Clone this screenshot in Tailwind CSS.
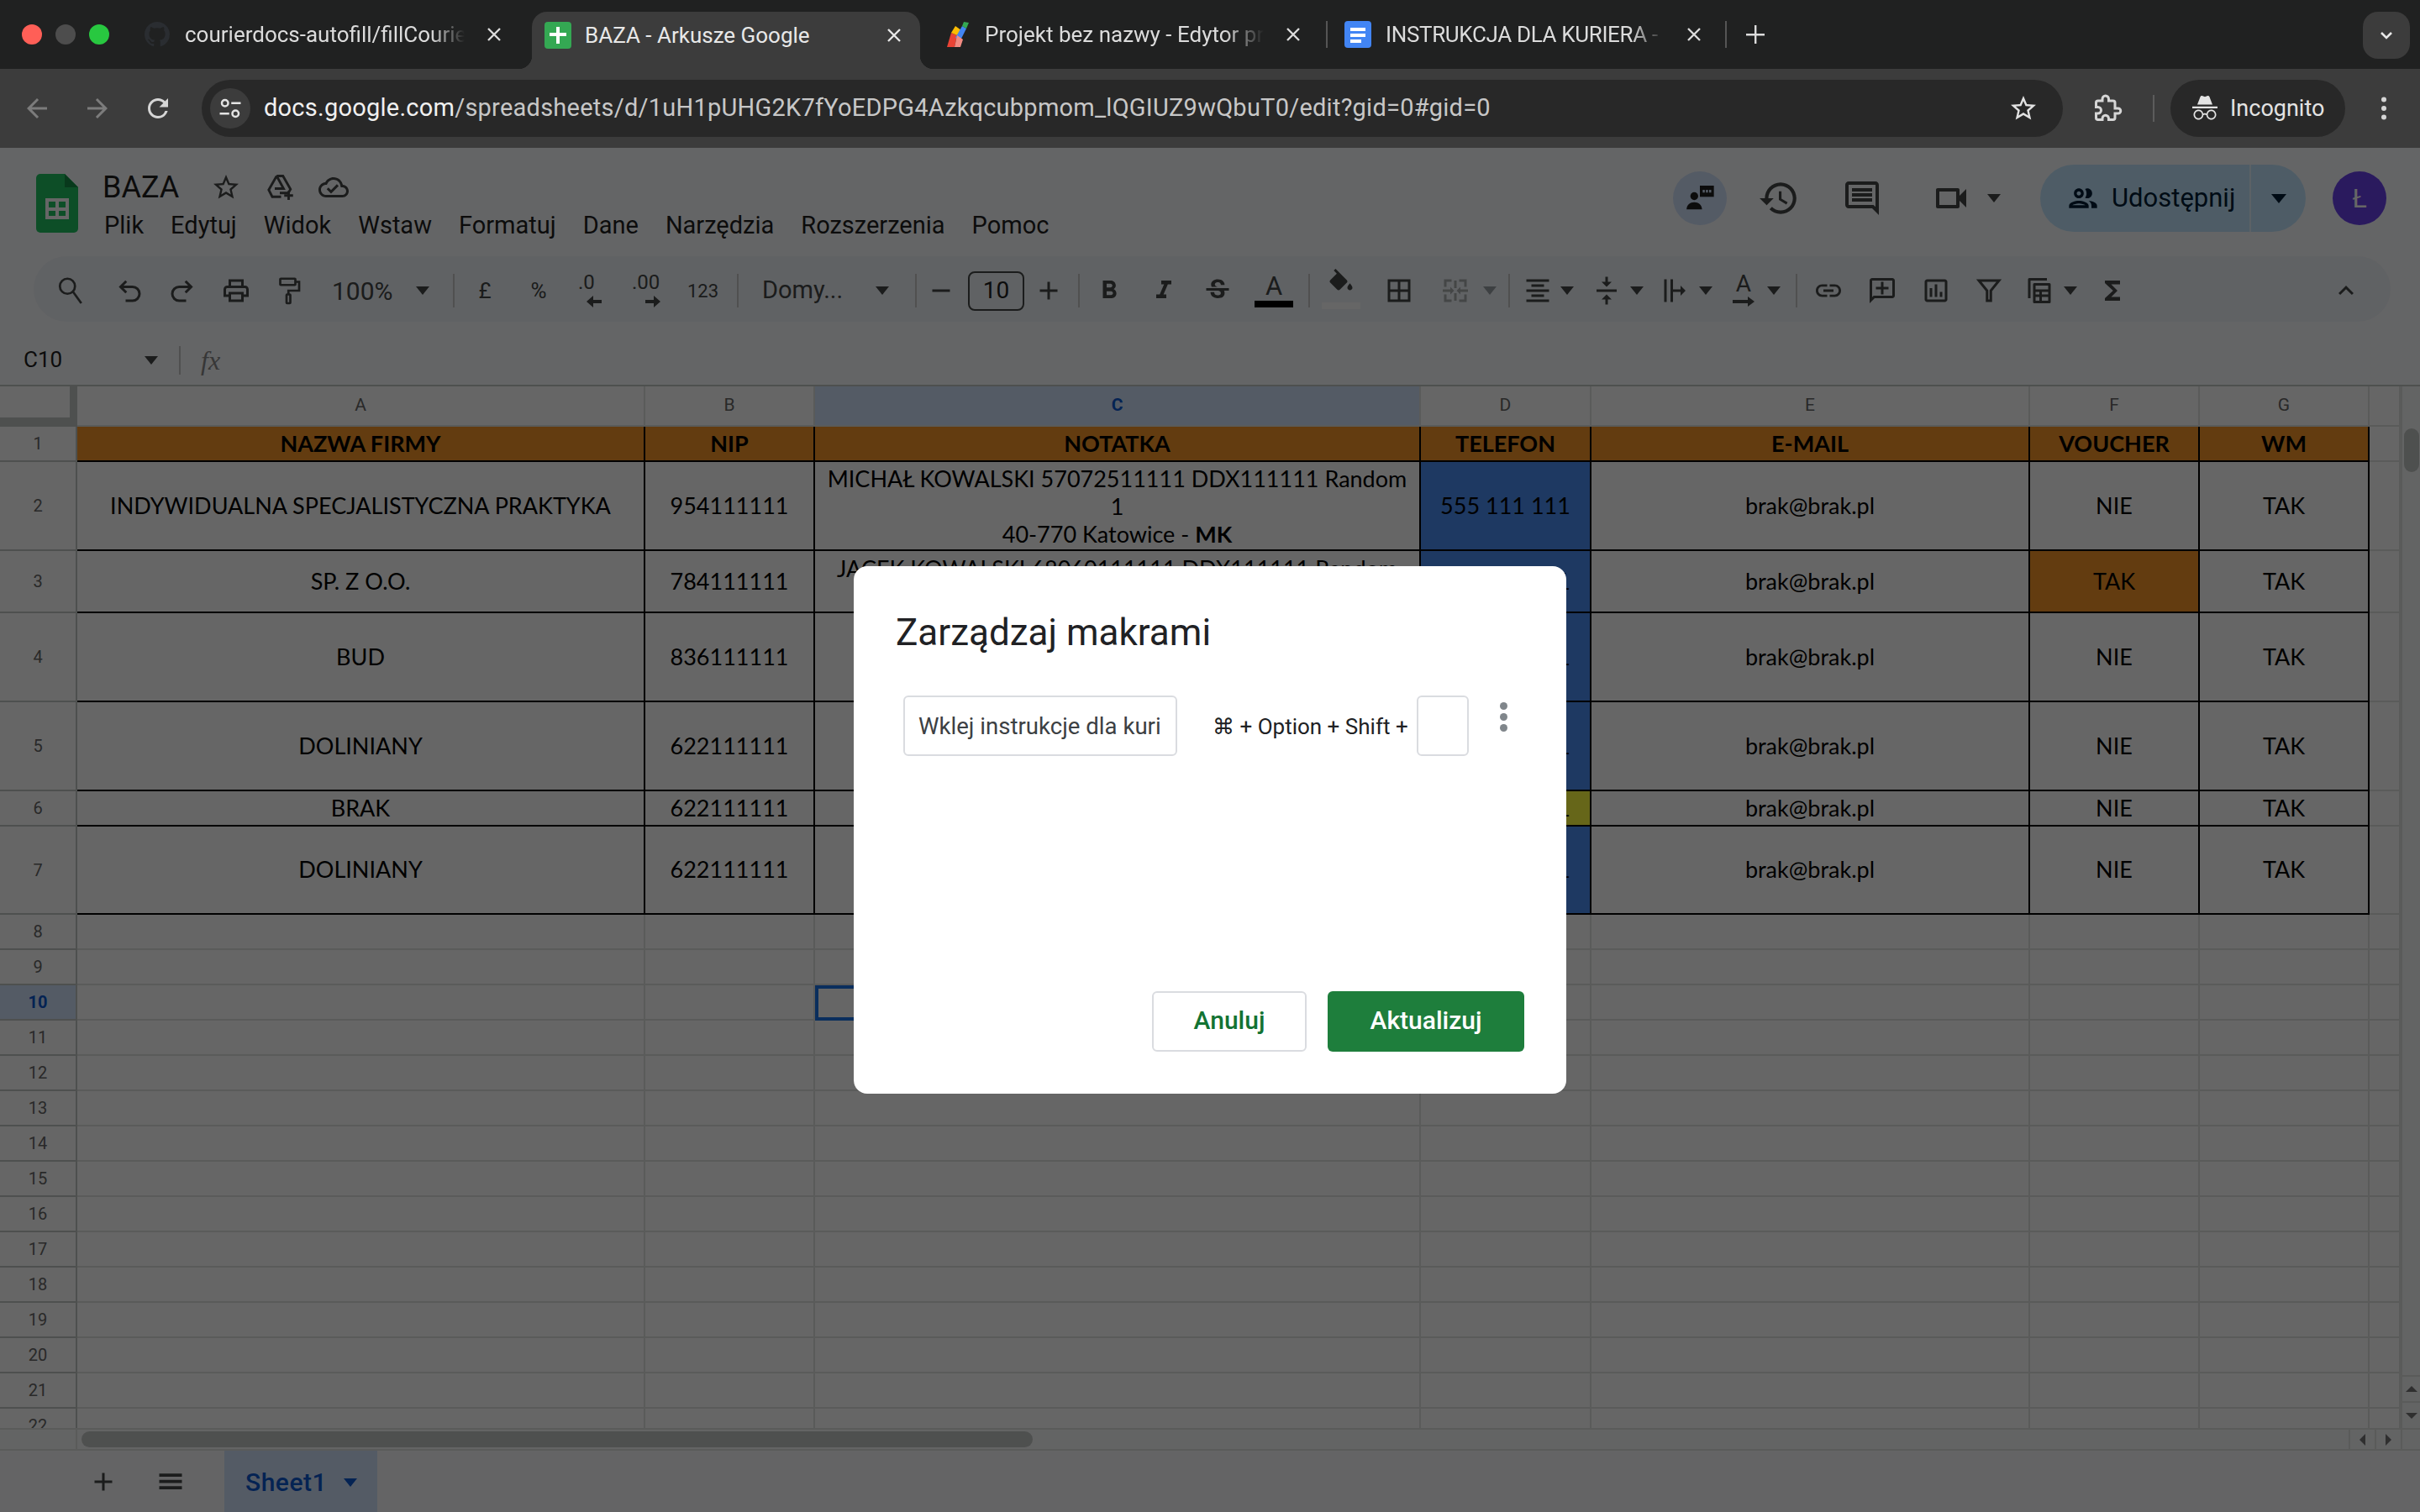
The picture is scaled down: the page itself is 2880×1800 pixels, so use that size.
<!DOCTYPE html>
<html lang="pl">
<head>
<meta charset="utf-8">
<title>BAZA</title>
<script src="https://cdn.jsdelivr.net/npm/@tailwindcss/browser@4"></script>
</head>
<body class="m-0">
<div class="relative w-[2880px] h-[1800px] overflow-hidden bg-white flex flex-col font-['Roboto',sans-serif] text-[#1f1f1f]">

  <!-- tab strip -->
  <div class="h-[82px] shrink-0 bg-[#202121] flex items-start text-[#dcdcdc] text-[26px]">
    <div class="w-[172px] shrink-0 h-[82px] flex items-center pl-[26px]">
      <div class="flex gap-[16px]">
        <span class="w-[24px] h-[24px] rounded-full bg-[#ff5f57]"></span>
        <span class="w-[24px] h-[24px] rounded-full bg-[#4d4d4d]"></span>
        <span class="w-[24px] h-[24px] rounded-full bg-[#28c840]"></span>
      </div>
    </div>
    <div class="w-[461px] shrink-0 h-[82px] flex items-center">
      <svg class="w-[30px] h-[30px]" viewBox="0 0 16 16" fill="#2a2d31"><path d="M8 0C3.58 0 0 3.58 0 8c0 3.54 2.29 6.53 5.47 7.59.4.07.55-.17.55-.38 0-.19-.01-.82-.01-1.49-2.01.37-2.53-.49-2.69-.94-.09-.23-.48-.94-.82-1.13-.28-.15-.68-.52-.01-.53.63-.01 1.08.58 1.23.82.72 1.21 1.87.87 2.33.66.07-.52.28-.87.51-1.07-1.78-.2-3.64-.89-3.64-3.95 0-.87.31-1.59.82-2.15-.08-.2-.36-1.02.08-2.12 0 0 .67-.21 2.2.82.64-.18 1.32-.27 2-.27s1.36.09 2 .27c1.53-1.04 2.2-.82 2.2-.82.44 1.1.16 1.92.08 2.12.51.56.82 1.27.82 2.15 0 3.07-1.87 3.75-3.65 3.95.29.25.54.73.54 1.48 0 1.07-.01 1.93-.01 2.2 0 .21.15.46.55.38A8.01 8.01 0 0 0 16 8c0-4.42-3.58-8-8-8z"/></svg>
      <span class="ml-[18px] w-[333px] overflow-hidden whitespace-nowrap [mask-image:linear-gradient(to_right,black_88%,transparent)]">courierdocs-autofill/fillCourierDocs</span>
      <svg class="ml-[24px] w-[22px] h-[22px]" viewBox="0 0 22 22" stroke="#dcdcdc" stroke-width="2.4"><path d="M4 4l14 14M18 4L4 18"/></svg>
    </div>
    <div class="relative w-[462px] shrink-0 h-[68px] mt-[14px] bg-[#3c3c3c] rounded-t-[18px] flex items-center pl-[15px] pb-[12px] text-[#e8e8e8]">
      <div class="absolute -left-[16px] bottom-0 w-[16px] h-[16px] bg-[radial-gradient(circle_at_0_0,transparent_16px,#3c3c3c_16.5px)]"></div>
      <div class="absolute -right-[16px] bottom-0 w-[16px] h-[16px] bg-[radial-gradient(circle_at_100%_0,transparent_16px,#3c3c3c_16.5px)]"></div>
      <svg class="w-[32px] h-[32px]" viewBox="0 0 32 32"><rect width="32" height="32" rx="4" fill="#34a853"/><path d="M14 6h4v7h8v4h-8v9h-4v-9H6v-4h8z" fill="#fff"/></svg>
      <span class="ml-[16px] w-[351px] whitespace-nowrap">BAZA - Arkusze Google</span>
      <svg class="ml-[6px] w-[22px] h-[22px]" viewBox="0 0 22 22" stroke="#e8e8e8" stroke-width="2.4"><path d="M4 4l14 14M18 4L4 18"/></svg>
    </div>
    <div class="w-[485px] shrink-0 h-[82px] flex items-center pl-[30px]">
      <svg class="w-[30px] h-[32px]" viewBox="0 0 30 32"><path d="M2 31L7 14l7 3-3 14z" fill="#ea4335"/><path d="M7 14l5-8 7 5-5 6z" fill="#fbbc04"/><path d="M12 20L20 6l5 3-7 14z" fill="#4285f4"/><path d="M20 6l2-5 6 1-3 7z" fill="#34a853"/><path d="M11 31l3-14 7 5-3 9z" fill="#f28b82"/></svg>
      <span class="ml-[17px] w-[332px] overflow-hidden whitespace-nowrap [mask-image:linear-gradient(to_right,black_86%,transparent)]">Projekt bez nazwy - Edytor projektu</span>
      <svg class="ml-[24px] w-[22px] h-[22px]" viewBox="0 0 22 22" stroke="#dcdcdc" stroke-width="2.4"><path d="M4 4l14 14M18 4L4 18"/></svg>
      <span class="ml-[28px] w-[2px] h-[32px] bg-[#555]"></span>
    </div>
    <div class="w-[524px] shrink-0 h-[82px] flex items-center pl-[20px]">
      <svg class="w-[32px] h-[32px]" viewBox="0 0 32 32"><rect width="32" height="32" rx="4" fill="#4285f4"/><path d="M7 8h18v4H7zM7 15h18v4H7zM7 22h13v4H7z" fill="#fff"/></svg>
      <span class="ml-[17px] w-[332px] overflow-hidden whitespace-nowrap tracking-[-0.35px] [mask-image:linear-gradient(to_right,black_88%,transparent)]">INSTRUKCJA DLA KURIERA - Dokumenty</span>
      <svg class="ml-[24px] w-[22px] h-[22px]" viewBox="0 0 22 22" stroke="#dcdcdc" stroke-width="2.4"><path d="M4 4l14 14M18 4L4 18"/></svg>
      <span class="ml-[26px] w-[2px] h-[32px] bg-[#555]"></span>
      <svg class="ml-[22px] w-[24px] h-[24px]" viewBox="0 0 24 24" fill="#dcdcdc"><path d="M11 1h2.4v10H23v2.4h-9.6V23H11v-9.6H1V11h10z"/></svg>
    </div>
    <div class="ml-auto mr-[12px] mt-[14px] w-[56px] h-[56px] rounded-[18px] bg-[#3c3c3c] flex items-center justify-center">
      <svg class="w-[24px] h-[24px]" viewBox="0 0 24 24" fill="none" stroke="#e8e8e8" stroke-width="2.6"><path d="M6 9l6 6 6-6"/></svg>
    </div>
  </div>

  <!-- address bar -->
  <div class="h-[94px] shrink-0 bg-[#3c3c3c] flex items-center">
    <svg class="ml-[26px] w-[36px] h-[36px]" viewBox="0 0 24 24" fill="#7c7c7c"><path d="M20 11H7.83l5.59-5.59L12 4l-8 8 8 8 1.41-1.41L7.83 13H20v-2z"/></svg>
    <svg class="ml-[36px] w-[36px] h-[36px]" viewBox="0 0 24 24" fill="#7c7c7c"><path d="M12 4l-1.41 1.41L16.17 11H4v2h12.17l-5.58 5.59L12 20l8-8z"/></svg>
    <svg class="ml-[36px] w-[36px] h-[36px]" viewBox="0 0 24 24" fill="#d6d6d6"><path d="M17.65 6.35A7.958 7.958 0 0 0 12 4c-4.42 0-7.99 3.58-7.99 8s3.57 8 7.99 8c3.73 0 6.84-2.55 7.73-6h-2.08A5.99 5.99 0 0 1 12 18c-3.31 0-6-2.69-6-6s2.69-6 6-6c1.66 0 3.14.69 4.22 1.78L13 11h7V4l-2.35 2.35z"/></svg>
    <div class="ml-[34px] w-[2215px] h-[68px] rounded-full bg-[#282828] flex items-center pl-[10px]">
      <div class="w-[48px] h-[48px] rounded-full bg-[#3c3c3c] flex items-center justify-center">
        <svg class="w-[30px] h-[30px]" viewBox="0 0 24 24" fill="none" stroke="#e3e3e3" stroke-width="2"><circle cx="7" cy="7" r="3"/><path d="M13 7h9M2 17h9"/><circle cx="17" cy="17" r="3"/></svg>
      </div>
      <span class="ml-[16px] text-[29px] text-[#c7c7c7] whitespace-nowrap tracking-[0.24px]"><span class="text-[#f0f0f0]">docs.google.com</span>/spreadsheets/d/1uH1pUHG2K7fYoEDPG4Azkqcubpmom_lQGIUZ9wQbuT0/edit?gid=0#gid=0</span>
      <svg class="ml-auto mr-[29px] w-[36px] h-[36px]" viewBox="0 0 24 24" fill="#e3e3e3"><path d="M22 9.24l-7.19-.62L12 2 9.19 8.63 2 9.24l5.46 4.73L5.82 21 12 17.27 18.18 21l-1.63-7.03L22 9.24zM12 15.4l-3.76 2.27 1-4.28-3.32-2.88 4.38-.38L12 6.1l1.71 4.04 4.38.38-3.32 2.88 1 4.28L12 15.4z"/></svg>
    </div>
    <svg class="ml-[35px] w-[36px] h-[36px]" viewBox="0 0 24 24" fill="none" stroke="#d6d6d6" stroke-width="2"><path d="M20.5 12H18V7.5A1.5 1.5 0 0 0 16.500 6H13V4.500a2.500 2.500 0 0 0-5 0V6H4.500A1.500 1.500 0 0 0 3 7.500V11h1.500a2.500 2.500 0 0 1 0 5H3v3.500A1.500 1.500 0 0 0 4.500 21H8v-1a2.500 2.500 0 0 1 5 0v1h3.500a1.500 1.500 0 0 0 1.500-1.500V16h2.500a2 2 0 0 0 0-4z"/></svg>
    <span class="ml-[36px] w-[2px] h-[32px] bg-[#5c5c5c]"></span>
    <div class="ml-[19px] w-[208px] h-[68px] rounded-full bg-[#282828] flex items-center pl-[23px] text-[#e3e3e3]">
      <svg class="w-[36px] h-[36px]" viewBox="0 0 24 24" fill="#e3e3e3"><path d="M17.06 13c-1.86 0-3.42 1.33-3.82 3.1-.95-.41-1.82-.3-2.48-.01C10.35 14.310 8.790 13 6.940 13 4.770 13 3 14.790 3 17s1.770 4 3.940 4c2.060 0 3.740-1.620 3.900-3.680.340-.240 1.230-.690 2.320.020.180 2.050 1.840 3.660 3.900 3.660 2.170 0 3.940-1.790 3.940-4s-1.770-4-3.940-4zM6.940 19.860c-1.560 0-2.810-1.280-2.810-2.860s1.260-2.860 2.810-2.860c1.560 0 2.810 1.280 2.810 2.860s-1.250 2.860-2.810 2.860zm10.120 0c-1.560 0-2.810-1.280-2.810-2.860s1.250-2.860 2.810-2.860 2.820 1.280 2.820 2.860-1.270 2.860-2.820 2.860zM22 10.500H2V12h20v-1.500zm-6.470-7.870c-.220-.490-.780-.750-1.310-.580L12 2.790l-2.230-.740-.050-.010c-.530-.150-1.090.130-1.290.640L6 9h12l-2.440-6.320-.030-.050z"/></svg>
      <span class="ml-[12px] text-[27px]">Incognito</span>
    </div>
    <svg class="ml-[28px] w-[36px] h-[36px]" viewBox="0 0 24 24" fill="#d6d6d6"><circle cx="12" cy="5" r="2"/><circle cx="12" cy="12" r="2"/><circle cx="12" cy="19" r="2"/></svg>
  </div>

  <!-- docs header -->
  <div class="h-[129px] shrink-0 bg-[#fbfcfe] flex items-start pt-[31px]">
    <svg class="ml-[43px] w-[50px] h-[70px]" viewBox="0 0 50 70"><path d="M5 0h29l16 16v49a5 5 0 0 1-5 5H5a5 5 0 0 1-5-5V5a5 5 0 0 1 5-5z" fill="#22c463"/><path d="M34 0l16 16H34z" fill="#158f47"/><path d="M11 29h28v25H11zm4 4v7h8v-7zm12 0v7h8v-7zM15 44v6h8v-6zm12 0v6h8v-6z" fill="#fff" fill-rule="evenodd"/></svg>
    <div class="ml-[29px] flex flex-col">
      <div class="flex items-center h-[32px]">
        <span class="text-[36px] leading-[32px]">BAZA</span>
        <svg class="ml-[38px] w-[36px] h-[36px]" viewBox="0 0 24 24" fill="#444746"><path d="M22 9.24l-7.19-.62L12 2 9.190 8.630 2 9.240l5.460 4.730L5.820 21 12 17.270 18.180 21l-1.630-7.030L22 9.240zM12 15.400l-3.760 2.270 1-4.280-3.320-2.880 4.380-.380L12 6.100l1.710 4.040 4.380.380-3.320 2.880 1 4.280L12 15.400z"/></svg>
        <svg class="ml-[28px] w-[36px] h-[36px]" viewBox="0 0 24 24" fill="none" stroke="#444746" stroke-width="1.900"><path d="M9.500 3h5l6 10.500-1.800 3H12M9.500 3L3.200 14l2.800 5.500h7M9.500 3l5.500 10H8"/><path d="M19 15v7M15.500 18.500h7"/></svg>
        <svg class="ml-[28px] w-[36px] h-[36px]" viewBox="0 0 24 24" fill="#444746"><path d="M19.350 10.040C18.670 6.590 15.640 4 12 4 9.110 4 6.600 5.640 5.350 8.040 2.340 8.360 0 10.910 0 14c0 3.310 2.690 6 6 6h13c2.760 0 5-2.240 5-5 0-2.640-2.050-4.780-4.650-4.960zM19 18H6c-2.210 0-4-1.790-4-4 0-2.050 1.530-3.760 3.560-3.970l1.070-.110.500-.950C8.080 7.140 9.940 6 12 6c2.620 0 4.880 1.860 5.390 4.430l.300 1.500 1.530.110c1.560.100 2.780 1.410 2.780 2.960 0 1.650-1.350 3-3 3zm-9-3.820l-2.090-2.090L6.500 13.500 10 17l6.010-6.010-1.410-1.410z"/></svg>
      </div>
      <div class="flex items-center h-[40px] mt-[10px] text-[29px] ml-[2px] whitespace-nowrap">
        <span>Plik</span><span class="ml-[32px]">Edytuj</span><span class="ml-[32px]">Widok</span><span class="ml-[32px]">Wstaw</span><span class="ml-[32px]">Formatuj</span><span class="ml-[32px]">Dane</span><span class="ml-[32px]">Narzędzia</span><span class="ml-[32px]">Rozszerzenia</span><span class="ml-[32px]">Pomoc</span>
      </div>
    </div>
    <div class="ml-auto flex items-center mt-[-11px] h-[80px]">
      <div class="w-[64px] h-[64px] rounded-full bg-[#d3e3fd] flex items-center justify-center">
        <svg class="w-[40px] h-[40px]" viewBox="0 0 24 24" fill="#1f1f1f"><circle cx="8" cy="10.500" r="2.800"/><path d="M2.500 20c0-3.200 2.500-5.200 5.500-5.200s5.500 2 5.500 5.200z"/><path d="M12 3h10v8H12z"/><path d="M14 6h1.500v2H14zm2.300 0h1.500v2h-1.500zm2.300 0h1.500v2h-1.500z" fill="#d3e3fd"/></svg>
      </div>
      <svg class="ml-[37px] w-[50px] h-[50px]" viewBox="0 0 24 24" fill="#444746"><path d="M13 3c-4.970 0-9 4.030-9 9H1l3.890 3.890.070.140L9 12H6c0-3.870 3.130-7 7-7s7 3.130 7 7-3.130 7-7 7c-1.930 0-3.680-.790-4.940-2.060l-1.420 1.420C8.270 19.990 10.510 21 13 21c4.970 0 9-4.030 9-9s-4.030-9-9-9zm-1 5v5l4.280 2.540.720-1.210-3.500-2.080V8H12z"/></svg>
      <svg class="ml-[50px] w-[48px] h-[48px]" viewBox="0 0 24 24" fill="#444746"><path d="M21.990 4c0-1.100-.890-2-1.990-2H4c-1.100 0-2 .900-2 2v12c0 1.100.900 2 2 2h14l4 4-.010-18zM20 4v13.170L18.830 16H4V4h16zM6 12h12v2H6zm0-3h12v2H6zm0-3h12v2H6z"/></svg>
      <svg class="ml-[58px] w-[48px] h-[48px]" viewBox="0 0 24 24" fill="#444746" fill-rule="evenodd"><path d="M17 10.500V7c0-.550-.450-1-1-1H4c-.550 0-1 .450-1 1v10c0 .550.450 1 1 1h12c.550 0 1-.450 1-1v-3.500l4 4v-11l-4 4zM15 16H5V8h10v8z"/></svg>
      <span class="ml-[19px] w-0 h-0 border-x-[8px] border-x-transparent border-t-[10px] border-t-[#444746]"></span>
      <div class="ml-[47px] w-[316px] h-[80px] rounded-full bg-[#c2e7ff] flex items-center overflow-hidden">
        <div class="w-[249px] h-full flex items-center pl-[31px]">
          <svg class="w-[40px] h-[40px]" viewBox="0 0 24 24" fill="#001d35"><path d="M9 12c1.930 0 3.500-1.570 3.500-3.500S10.930 5 9 5 5.500 6.570 5.500 8.500 7.070 12 9 12zm0-5c.830 0 1.500.670 1.500 1.500S9.830 10 9 10s-1.500-.670-1.500-1.500S8.170 7 9 7zm0 6.750c-2.340 0-7 1.170-7 3.500V19h14v-1.750c0-2.330-4.660-3.500-7-3.500zM4.340 17c.840-.580 2.870-1.250 4.660-1.250s3.820.670 4.660 1.250H4.340zM16.040 13.810c1.160.840 1.960 1.960 1.960 3.440V19h4v-1.750c0-2.020-3.500-3.170-5.960-3.440zM15 12c1.930 0 3.500-1.570 3.500-3.500S16.930 5 15 5c-.540 0-1.040.130-1.500.350.630.890 1 1.980 1 3.150s-.370 2.260-1 3.150c.460.220.960.350 1.500.350z"/></svg>
          <span class="ml-[14px] text-[31px] text-[#001d35] whitespace-nowrap">Udostępnij</span>
        </div>
        <div class="w-[2px] h-full bg-[#e6f4ff]"></div>
        <div class="flex-1 flex items-center justify-center">
          <span class="w-0 h-0 border-x-[9px] border-x-transparent border-t-[11px] border-t-[#001d35]"></span>
        </div>
      </div>
      <div class="ml-[32px] mr-[40px] w-[64px] h-[64px] rounded-full bg-[#6a41ec] flex items-center justify-center text-white text-[32px]">Ł</div>
    </div>
  </div>

  <!-- sheets toolbar -->
  <div class="h-[78px] shrink-0 bg-[#fbfcfe]">
    <div class="ml-[40px] w-[2805px] h-[78px] pt-[4px] rounded-full bg-[#f0f4f9] flex items-center text-[#444746]">
      <svg class="ml-[26px] w-[36px] h-[36px]" viewBox="0 0 24 24" fill="none" stroke="#444746" stroke-width="1.800"><circle cx="9.500" cy="8.500" r="6"/><path d="M14 13l6.500 9"/></svg>
      <svg class="ml-[34px] w-[36px] h-[36px]" viewBox="0 0 24 24" fill="none" stroke="#444746" stroke-width="2"><path d="M9.500 4.500L5 9l4.500 4.500M5 9h9.500a5 5 0 0 1 0 11H9"/></svg>
      <svg class="ml-[27px] w-[36px] h-[36px]" viewBox="0 0 24 24" fill="none" stroke="#444746" stroke-width="2"><path d="M14.500 4.500L19 9l-4.500 4.500M19 9H9.500a5 5 0 0 0 0 11H15"/></svg>
      <svg class="ml-[28px] w-[36px] h-[36px]" viewBox="0 0 24 24" fill="#444746" fill-rule="evenodd"><path d="M19 8h-1V3H6v5H5c-1.660 0-3 1.340-3 3v6h4v4h12v-4h4v-6c0-1.660-1.340-3-3-3zM8 5h8v3H8V5zm8 14H8v-4h8v4zm4-4h-2v-2H6v2H4v-4c0-.550.450-1 1-1h14c.550 0 1 .450 1 1v4z"/></svg>
      <svg class="ml-[27px] w-[36px] h-[36px]" viewBox="0 0 24 24" fill="none" stroke="#444746" stroke-width="1.800"><rect x="5" y="2.500" width="12" height="5" rx=".5"/><path d="M17 5h3v7h-8.500v3"/><rect x="10" y="15" width="3" height="7" rx=".5"/></svg>
      <span class="ml-[33px] w-[75px] text-[30px] text-[#444746] whitespace-nowrap">100%</span>
      <span class="ml-[25px] w-0 h-0 border-x-[8px] border-x-transparent border-t-[10px] border-t-[#444746]"></span>
      <span class="ml-[28px] w-[2px] h-[40px] bg-[#c7c7c7]"></span>
      <span class="ml-[18px] w-[36px] text-center text-[26px]">£</span>
      <span class="ml-[28px] w-[36px] text-center text-[26px]">%</span>
      <div class="ml-[25px] w-[36px] h-[44px] flex flex-col">
        <span class="text-[24px] leading-[24px] whitespace-nowrap pl-[4px]">.0</span>
        <svg class="mt-[4px] ml-[14px] w-[20px] h-[14px]" viewBox="0 0 20 14" fill="#444746"><path d="M8 0v5h10v4H8v5L0 7z"/></svg>
      </div>
      <div class="ml-[32px] w-[36px] h-[44px] flex flex-col">
        <span class="text-[24px] leading-[24px] whitespace-nowrap">.00</span>
        <svg class="mt-[4px] ml-[14px] w-[20px] h-[14px]" viewBox="0 0 20 14" fill="#444746"><path d="M12 0v5H2v4h10v5l8-7z"/></svg>
      </div>
      <span class="ml-[30px] w-[36px] text-center text-[22px]">123</span>
      <span class="ml-[23px] w-[2px] h-[40px] bg-[#c7c7c7]"></span>
      <span class="ml-[28px] w-[96px] text-[29px] whitespace-nowrap">Domy...</span>
      <span class="ml-[39px] w-0 h-0 border-x-[8px] border-x-transparent border-t-[10px] border-t-[#444746]"></span>
      <span class="ml-[31px] w-[2px] h-[40px] bg-[#c7c7c7]"></span>
      <svg class="ml-[11px] w-[36px] h-[36px]" viewBox="0 0 24 24" fill="#444746"><path d="M5 11h14v2H5z"/></svg>
      <div class="ml-[14px] w-[67px] h-[47px] rounded-[8px] border-2 border-[#444746] flex items-center justify-center text-[28px] text-[#1f1f1f]">10</div>
      <svg class="ml-[11px] w-[36px] h-[36px]" viewBox="0 0 24 24" fill="#444746"><path d="M19 13h-6v6h-2v-6H5v-2h6V5h2v6h6v2z"/></svg>
      <span class="ml-[17px] w-[2px] h-[40px] bg-[#c7c7c7]"></span>
      <svg class="ml-[17px] w-[36px] h-[36px]" viewBox="0 0 24 24" fill="#444746"><path d="M15.600 10.790c.970-.670 1.650-1.770 1.650-2.790 0-2.260-1.750-4-4-4H7v14h7.040c2.090 0 3.710-1.700 3.710-3.790 0-1.520-.860-2.820-2.150-3.420zM10 6.500h3c.830 0 1.500.670 1.500 1.500s-.670 1.500-1.500 1.500h-3v-3zm3.500 9H10v-3h3.500c.830 0 1.500.670 1.500 1.500s-.670 1.500-1.500 1.500z"/></svg>
      <svg class="ml-[29px] w-[36px] h-[36px]" viewBox="0 0 24 24" fill="#444746"><path d="M10 4v3h2.210l-3.420 8H6v3h8v-3h-2.210l3.420-8H18V4z"/></svg>
      <svg class="ml-[28px] w-[36px] h-[36px]" viewBox="0 0 24 24" fill="#444746"><path d="M7.240 8.750c-.260-.480-.390-1.030-.390-1.670 0-.610.130-1.160.400-1.670.260-.500.630-.930 1.110-1.290a5.730 5.730 0 0 1 1.700-.830c.660-.190 1.390-.290 2.180-.29.810 0 1.540.11 2.210.34.660.22 1.230.54 1.690.94.470.40.830.88 1.080 1.430.250.550.380 1.150.380 1.810h-3.010c0-.310-.050-.59-.150-.85-.090-.27-.24-.49-.44-.68-.200-.19-.45-.33-.75-.44-.300-.100-.66-.16-1.060-.16-.39 0-.74.04-1.030.13-.29.09-.53.21-.72.36-.19.16-.34.34-.44.55-.100.21-.15.43-.15.66 0 .48.25.88.74 1.21.38.25.77.48 1.41.7H7.390c-.050-.08-.11-.17-.15-.25zM21 12v-2H3v2h9.620c.180.070.400.140.550.200.370.170.660.340.870.510.210.170.350.360.430.570.070.200.110.430.110.69 0 .230-.050.450-.140.660-.090.200-.230.380-.420.530-.190.150-.42.260-.71.35-.29.08-.63.13-1.01.13-.43 0-.83-.04-1.18-.13s-.66-.23-.91-.42c-.25-.19-.45-.44-.59-.75s-.25-.76-.25-1.21H6.400c0 .55.08 1.130.24 1.58.16.45.37.85.65 1.21.28.35.60.66.98.92.37.26.78.48 1.22.65.44.17.90.30 1.38.39.48.08.96.13 1.44.13.80 0 1.53-.09 2.18-.28s1.21-.45 1.67-.79c.46-.34.82-.77 1.070-1.27s.38-1.07.38-1.71c0-.60-.10-1.14-.31-1.61-.05-.11-.11-.23-.17-.33H21z"/></svg>
      <div class="ml-[26px] w-[46px] flex flex-col items-center">
        <span class="text-[31px] leading-[30px] h-[30px]">A</span>
        <span class="mt-[2px] w-[46px] h-[8px] bg-black"></span>
      </div>
      <span class="ml-[18px] w-[2px] h-[40px] bg-[#c7c7c7]"></span>
      <div class="ml-[14px] w-[46px] flex flex-col items-center">
        <svg class="w-[36px] h-[36px] -mt-[4px]" viewBox="0 0 24 24" fill="#444746"><path d="M16.560 8.940L7.620 0 6.210 1.410l2.380 2.380-5.150 5.150c-.590.590-.590 1.540 0 2.120l5.500 5.500c.290.290.680.440 1.060.44s.770-.150 1.060-.44l5.500-5.500c.590-.580.590-1.530 0-2.120zM19 11.500s-2 2.170-2 3.500c0 1.100.900 2 2 2s2-.900 2-2c0-1.330-2-3.500-2-3.500z"/></svg>
        <span class="mt-[4px] w-[46px] h-[8px] bg-white"></span>
      </div>
      <svg class="ml-[28px] w-[36px] h-[36px]" viewBox="0 0 24 24" fill="#444746"><path d="M3 3v18h18V3H3zm8 16H5v-6h6v6zm0-8H5V5h6v6zm8 8h-6v-6h6v6zm0-8h-6V5h6v6z"/></svg>
      <svg class="ml-[31px] w-[36px] h-[36px] opacity-40" viewBox="0 0 24 24" fill="#444746"><path d="M3 3h6v2H5v4H3zM15 3h6v6h-2V5h-4zM3 15h2v4h4v2H3zM19 15h2v6h-6v-2h4zM11 4h2v6h-2zM11 14h2v6h-2zM2 11h6V9l3 3-3 3v-2H2zM22 13h-6v2l-3-3 3-3v2h6z"/></svg>
      <span class="ml-[15px] w-0 h-0 border-x-[8px] border-x-transparent border-t-[10px] border-t-[#9aa0a6]"></span>
      <span class="ml-[14px] w-[2px] h-[40px] bg-[#c7c7c7]"></span>
      <svg class="ml-[15px] w-[36px] h-[36px]" viewBox="0 0 24 24" fill="#444746"><path d="M7 15v2h10v-2H7zm-4 6h18v-2H3v2zm0-8h18v-2H3v2zm4-6v2h10V7H7zM3 3v2h18V3H3z"/></svg>
      <span class="ml-[9px] w-0 h-0 border-x-[8px] border-x-transparent border-t-[10px] border-t-[#444746]"></span>
      <svg class="ml-[21px] w-[36px] h-[36px]" viewBox="0 0 24 24" fill="#444746"><path d="M8 19h3v4h2v-4h3l-4-4-4 4zm8-14h-3V1h-2v4H8l4 4 4-4zM4 11v2h16v-2H4z"/></svg>
      <span class="ml-[10px] w-0 h-0 border-x-[8px] border-x-transparent border-t-[10px] border-t-[#444746]"></span>
      <svg class="ml-[20px] w-[36px] h-[36px]" viewBox="0 0 24 24" fill="#444746"><path d="M3 3h2v18H3zM8 3h2v18H8zM10 11h6V8l4 4-4 4v-3h-6z"/></svg>
      <span class="ml-[10px] w-0 h-0 border-x-[8px] border-x-transparent border-t-[10px] border-t-[#444746]"></span>
      <div class="ml-[19px] w-[36px] h-[44px] flex flex-col items-center">
        <span class="text-[28px] leading-[28px]">A</span>
        <svg class="w-[30px] h-[14px]" viewBox="0 0 30 14" fill="#444746"><path d="M2 5h18V1l8 6-8 6V9H2z"/></svg>
      </div>
      <span class="ml-[10px] w-0 h-0 border-x-[8px] border-x-transparent border-t-[10px] border-t-[#444746]"></span>
      <span class="ml-[18px] w-[2px] h-[40px] bg-[#c7c7c7]"></span>
      <svg class="ml-[19px] w-[36px] h-[36px]" viewBox="0 0 24 24" fill="#444746"><path d="M3.900 12c0-1.710 1.390-3.100 3.100-3.100h4V7H7c-2.760 0-5 2.240-5 5s2.240 5 5 5h4v-1.900H7c-1.710 0-3.100-1.390-3.100-3.100zM8 13h8v-2H8v2zm9-6h-4v1.900h4c1.710 0 3.100 1.390 3.100 3.100s-1.390 3.100-3.100 3.100h-4V17h4c2.760 0 5-2.240 5-5s-2.240-5-5-5z"/></svg>
      <svg class="ml-[28px] w-[36px] h-[36px]" viewBox="0 0 24 24" fill="#444746"><path d="M22 4c0-1.100-.900-2-2-2H4c-1.100 0-2 .900-2 2v12c0 1.100.900 2 2 2h14l4 4V4zm-2 13.170L18.830 16H4V4h16v13.170zM13 5h-2v4H7v2h4v4h2v-4h4V9h-4z" transform="matrix(-1 0 0 1 24 0)"/></svg>
      <svg class="ml-[28px] w-[36px] h-[36px]" viewBox="0 0 24 24" fill="#444746"><path d="M19 3H5c-1.100 0-2 .900-2 2v14c0 1.100.900 2 2 2h14c1.100 0 2-.900 2-2V5c0-1.100-.900-2-2-2zm0 16H5V5h14v14zM7 10h2v7H7zm4-3h2v10h-2zm4 6h2v4h-2z"/></svg>
      <svg class="ml-[27px] w-[36px] h-[36px]" viewBox="0 0 24 24" fill="none" stroke="#444746" stroke-width="2"><path d="M4 4h16l-6.500 8v8h-3v-8z"/></svg>
      <svg class="ml-[24px] w-[36px] h-[36px]" viewBox="0 0 24 24" fill="#444746"><path d="M4 2h14v2H5v14H3V3a1 1 0 0 1 1-1zm4 4h12a1 1 0 0 1 1 1v14a1 1 0 0 1-1 1H8a1 1 0 0 1-1-1V7a1 1 0 0 1 1-1zm1 2v3h10V8zm0 5v2h3v-2zm5 0v2h5v-2zm-5 4v3h3v-3zm5 0v3h5v-3z"/></svg>
      <span class="ml-[11px] w-0 h-0 border-x-[8px] border-x-transparent border-t-[10px] border-t-[#444746]"></span>
      <svg class="ml-[24px] w-[36px] h-[36px]" viewBox="0 0 24 24" fill="#444746"><path d="M18 4H6v2l6.500 6L6 18v2h12v-3h-7l5-5-5-5h7z"/></svg>
      <svg class="ml-auto mr-[35px] w-[36px] h-[36px]" viewBox="0 0 24 24" fill="#444746"><path d="M7.410 15.410L12 10.830l4.590 4.580L18 14l-6-6-6 6z"/></svg>
    </div>
  </div>

  <!-- formula bar -->
  <div class="h-[75px] shrink-0 pt-[16px] bg-[#fbfcfe] flex items-center">
    <span class="ml-[28px] w-[144px] text-[26px]">C10</span>
    <span class="w-0 h-0 border-x-[8px] border-x-transparent border-t-[10px] border-t-[#444746]"></span>
    <span class="ml-[25px] w-[2px] h-[34px] bg-[#c7c7c7]"></span>
    <span class="ml-[24px] text-[32px] italic font-['Liberation_Serif',serif] text-[#8a8a8a]">fx</span>
  </div>

  <!-- grid -->
  <div class="h-[1242px] shrink-0 flex border-t-2 border-[#c4c7c5]">
    <div class="w-[2857px] h-full overflow-hidden grid grid-cols-[92px_676px_202px_721px_203px_522px_202px_202px_37px] grid-rows-[48px_42px_106px_74px_106px_106px_42px_105px_repeat(15,42px)] font-['Lato',sans-serif] text-[27px] text-black [&>div]:border-r-2 [&>div]:border-b-2 [&>div]:border-[#e1e3e1] [&>div]:flex [&>div]:items-center [&>div]:justify-center">

      <div class="relative bg-[#f9fbfd] border-[#c4c7c5]! items-start! justify-start!"><span class="w-[83px] h-[37px] bg-white"></span><span class="absolute left-[83px] top-0 w-[7px] h-full bg-[#c4c7c5]"></span><span class="absolute left-0 top-[37px] w-full h-[9px] bg-[#c4c7c5]"></span></div>
      <div class="font-['Roboto',sans-serif] text-[21px] text-[#666]">A</div>
      <div class="font-['Roboto',sans-serif] text-[21px] text-[#666]">B</div>
      <div class="bg-[#d3e3fd] font-['Roboto',sans-serif] text-[21px] font-bold text-[#0b57d0]">C</div>
      <div class="font-['Roboto',sans-serif] text-[21px] text-[#666]">D</div>
      <div class="font-['Roboto',sans-serif] text-[21px] text-[#666]">E</div>
      <div class="font-['Roboto',sans-serif] text-[21px] text-[#666]">F</div>
      <div class="font-['Roboto',sans-serif] text-[21px] text-[#666]">G</div>
      <div></div>

      <div class="font-['Roboto',sans-serif] text-[20px] text-[#666] border-[#c4c7c5]!">1</div>
      <div class="bg-[#f79628] font-bold border-black!">NAZWA FIRMY</div>
      <div class="bg-[#f79628] font-bold border-black!">NIP</div>
      <div class="bg-[#f79628] font-bold border-black!">NOTATKA</div>
      <div class="bg-[#f79628] font-bold border-black!">TELEFON</div>
      <div class="bg-[#f79628] font-bold border-black!">E-MAIL</div>
      <div class="bg-[#f79628] font-bold border-black!">VOUCHER</div>
      <div class="bg-[#f79628] font-bold border-black!">WM</div>
      <div></div>

      <div class="font-['Roboto',sans-serif] text-[20px] text-[#666] border-[#c4c7c5]!">2</div>
      <div class="border-black!">INDYWIDUALNA SPECJALISTYCZNA PRAKTYKA</div>
      <div class="border-black!">954111111</div>
      <div class="border-black! text-center leading-[33px] px-[8px] overflow-hidden"><span>MICHAŁ KOWALSKI 57072511111 DDX111111 Random 1<br>40-770 Katowice - <b>MK</b></span></div>
      <div class="bg-[#4d8ff5] border-black!">555 111 111</div>
      <div class="border-black!">brak@brak.pl</div>
      <div class="border-black!">NIE</div>
      <div class="border-black!">TAK</div>
      <div></div>

      <div class="font-['Roboto',sans-serif] text-[20px] text-[#666] border-[#c4c7c5]!">3</div>
      <div class="border-black!">SP. Z O.O.</div>
      <div class="border-black!">784111111</div>
      <div class="border-black! items-start! text-center leading-[33px] px-[8px] pt-[4px] overflow-hidden"><span>JACEK KOWALSKI 68060111111 DDX111111 Random<br>1<br>40-770 Katowice</span></div>
      <div class="bg-[#4d8ff5] border-black!">555 111 111</div>
      <div class="border-black!">brak@brak.pl</div>
      <div class="bg-[#f79628] border-black!">TAK</div>
      <div class="border-black!">TAK</div>
      <div></div>

      <div class="font-['Roboto',sans-serif] text-[20px] text-[#666] border-[#c4c7c5]!">4</div>
      <div class="border-black!">BUD</div>
      <div class="border-black!">836111111</div>
      <div class="border-black!"></div>
      <div class="bg-[#4d8ff5] border-black!">555 111 111</div>
      <div class="border-black!">brak@brak.pl</div>
      <div class="border-black!">NIE</div>
      <div class="border-black!">TAK</div>
      <div></div>

      <div class="font-['Roboto',sans-serif] text-[20px] text-[#666] border-[#c4c7c5]!">5</div>
      <div class="border-black!">DOLINIANY</div>
      <div class="border-black!">622111111</div>
      <div class="border-black!"></div>
      <div class="bg-[#4d8ff5] border-black!">555 111 111</div>
      <div class="border-black!">brak@brak.pl</div>
      <div class="border-black!">NIE</div>
      <div class="border-black!">TAK</div>
      <div></div>

      <div class="font-['Roboto',sans-serif] text-[20px] text-[#666] border-[#c4c7c5]!">6</div>
      <div class="border-black!">BRAK</div>
      <div class="border-black!">622111111</div>
      <div class="border-black!"></div>
      <div class="bg-[#ffff40] border-black!">555 111 111</div>
      <div class="border-black!">brak@brak.pl</div>
      <div class="border-black!">NIE</div>
      <div class="border-black!">TAK</div>
      <div></div>

      <div class="font-['Roboto',sans-serif] text-[20px] text-[#666] border-[#c4c7c5]!">7</div>
      <div class="border-black!">DOLINIANY</div>
      <div class="border-black!">622111111</div>
      <div class="border-black!"></div>
      <div class="bg-[#4d8ff5] border-black!">555 111 111</div>
      <div class="border-black!">brak@brak.pl</div>
      <div class="border-black!">NIE</div>
      <div class="border-black!">TAK</div>
      <div></div>

      <div class="font-['Roboto',sans-serif] text-[20px] text-[#666] border-[#c4c7c5]!">8</div><div></div><div></div><div></div><div></div><div></div><div></div><div></div><div></div>
      <div class="font-['Roboto',sans-serif] text-[20px] text-[#666] border-[#c4c7c5]!">9</div><div></div><div></div><div></div><div></div><div></div><div></div><div></div><div></div>
      <div class="bg-[#d3e3fd] font-['Roboto',sans-serif] text-[20px] font-bold text-[#0b57d0] border-[#c4c7c5]!">10</div><div></div><div></div><div class="border-[4px]! border-[#1a73e8]!"></div><div></div><div></div><div></div><div></div><div></div>
      <div class="font-['Roboto',sans-serif] text-[20px] text-[#666] border-[#c4c7c5]!">11</div><div></div><div></div><div></div><div></div><div></div><div></div><div></div><div></div>
      <div class="font-['Roboto',sans-serif] text-[20px] text-[#666] border-[#c4c7c5]!">12</div><div></div><div></div><div></div><div></div><div></div><div></div><div></div><div></div>
      <div class="font-['Roboto',sans-serif] text-[20px] text-[#666] border-[#c4c7c5]!">13</div><div></div><div></div><div></div><div></div><div></div><div></div><div></div><div></div>
      <div class="font-['Roboto',sans-serif] text-[20px] text-[#666] border-[#c4c7c5]!">14</div><div></div><div></div><div></div><div></div><div></div><div></div><div></div><div></div>
      <div class="font-['Roboto',sans-serif] text-[20px] text-[#666] border-[#c4c7c5]!">15</div><div></div><div></div><div></div><div></div><div></div><div></div><div></div><div></div>
      <div class="font-['Roboto',sans-serif] text-[20px] text-[#666] border-[#c4c7c5]!">16</div><div></div><div></div><div></div><div></div><div></div><div></div><div></div><div></div>
      <div class="font-['Roboto',sans-serif] text-[20px] text-[#666] border-[#c4c7c5]!">17</div><div></div><div></div><div></div><div></div><div></div><div></div><div></div><div></div>
      <div class="font-['Roboto',sans-serif] text-[20px] text-[#666] border-[#c4c7c5]!">18</div><div></div><div></div><div></div><div></div><div></div><div></div><div></div><div></div>
      <div class="font-['Roboto',sans-serif] text-[20px] text-[#666] border-[#c4c7c5]!">19</div><div></div><div></div><div></div><div></div><div></div><div></div><div></div><div></div>
      <div class="font-['Roboto',sans-serif] text-[20px] text-[#666] border-[#c4c7c5]!">20</div><div></div><div></div><div></div><div></div><div></div><div></div><div></div><div></div>
      <div class="font-['Roboto',sans-serif] text-[20px] text-[#666] border-[#c4c7c5]!">21</div><div></div><div></div><div></div><div></div><div></div><div></div><div></div><div></div>
      <div class="font-['Roboto',sans-serif] text-[20px] text-[#666] border-[#c4c7c5]!">22</div><div></div><div></div><div></div><div></div><div></div><div></div><div></div><div></div>
    </div>
    <!-- vertical scrollbar -->
    <div class="w-[23px] h-full border-l-2 border-[#e1e3e1] bg-[#f8f9fa] flex flex-col items-center">
      <div class="mt-[50px] w-[18px] h-[52px] rounded-full bg-[#c4c7c5]"></div>
      <div class="mt-auto w-full h-[31px] border-t-2 border-[#e1e3e1] flex items-center justify-center"><span class="w-0 h-0 border-x-[7px] border-x-transparent border-b-[7px] border-b-[#777]"></span></div>
      <div class="w-full h-[32px] border-t-2 border-[#e1e3e1] flex items-center justify-center"><span class="w-0 h-0 border-x-[7px] border-x-transparent border-t-[7px] border-t-[#777]"></span></div>
    </div>
  </div>

  <!-- horizontal scrollbar -->
  <div class="h-[27px] shrink-0 bg-[#f8f9fa] border-t-2 border-[#e1e3e1] border-b-2 flex items-center">
    <div class="w-[92px] h-full border-r-2 border-[#e1e3e1]"></div>
    <div class="ml-[5px] w-[1132px] h-[19px] rounded-full bg-[#c4c7c5]"></div>
    <div class="ml-auto w-[31px] h-full border-l-2 border-[#e1e3e1] flex items-center justify-center"><span class="w-0 h-0 border-y-[7px] border-y-transparent border-r-[7px] border-r-[#777]"></span></div>
    <div class="w-[31px] h-full border-l-2 border-[#e1e3e1] flex items-center justify-center"><span class="w-0 h-0 border-y-[7px] border-y-transparent border-l-[7px] border-l-[#777]"></span></div>
    <div class="w-[23px] h-full border-l-2 border-[#e1e3e1]"></div>
  </div>

  <!-- sheet tabs -->
  <div class="h-[73px] shrink-0 bg-[#f9fbfd] flex items-stretch">
    <svg class="ml-[105px] self-center w-[36px] h-[36px]" viewBox="0 0 24 24" fill="#444746"><path d="M19 13h-6v6h-2v-6H5v-2h6V5h2v6h6v2z"/></svg>
    <svg class="ml-[44px] self-center w-[36px] h-[36px]" viewBox="0 0 24 24" fill="#444746"><path d="M3 18h18v-2.500H3zm0-5h18v-2.500H3zm0-7.500V8h18V5.500z"/></svg>
    <div class="ml-[46px] w-[182px] bg-[#d3e3fd] flex items-center pl-[25px] pt-[2px]">
      <span class="text-[30px] font-medium text-[#0b57d0] tracking-[0.5px]">Sheet1</span>
      <span class="ml-[20px] w-0 h-0 border-x-[8px] border-x-transparent border-t-[10px] border-t-[#0b57d0]"></span>
    </div>
  </div>

  <!-- dimming layer and dialog -->
  <div class="absolute left-0 right-0 top-[176px] bottom-0 bg-black/60 flex items-center justify-center">
    <div class="w-[848px] h-[628px] rounded-[16px] bg-white pt-[52px] px-[50px] flex flex-col">
      <h2 class="text-[44px] leading-[54px] text-[#202124] whitespace-nowrap">Zarządzaj makrami</h2>
      <div class="mt-[48px] ml-[9px] flex items-start">
        <div class="w-[326px] h-[72px] pt-[2px] rounded-[6px] border-2 border-[#dadce0] flex items-center pl-[16px] pr-[16px] text-[27.6px] text-[#3c4043]"><span class="block w-[288px] overflow-hidden whitespace-nowrap">Wklej instrukcje dla kuri</span></div>
        <span class="ml-[42px] h-[72px] pt-[2px] flex items-center text-[26px] text-[#202124] whitespace-nowrap">⌘ + Option + Shift +</span>
        <div class="ml-[10px] w-[62px] h-[72px] rounded-[6px] border-2 border-[#dadce0]"></div>
        <div class="ml-[37px] mt-[8px] flex flex-col gap-[4px]">
          <span class="w-[9px] h-[9px] rounded-full bg-[#80868b]"></span>
          <span class="w-[9px] h-[9px] rounded-full bg-[#80868b]"></span>
          <span class="w-[9px] h-[9px] rounded-full bg-[#80868b]"></span>
        </div>
      </div>
      <div class="mt-auto mb-[50px] flex justify-end gap-[25px]">
        <div class="w-[184px] h-[72px] pb-[3px] rounded-[6px] border-2 border-[#dadce0] flex items-center justify-center text-[30px] font-medium text-[#137333]">Anuluj</div>
        <div class="w-[234px] h-[72px] pb-[3px] rounded-[6px] bg-[#1e7e3c] flex items-center justify-center text-[30px] font-medium text-white">Aktualizuj</div>
      </div>
    </div>
  </div>
</div>
</body>
</html>
